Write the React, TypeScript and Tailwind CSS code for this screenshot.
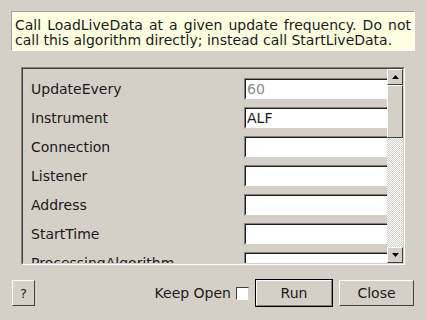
import React from "react";

const rows = [
  { label: "UpdateEvery", value: "60", placeholder: true },
  { label: "Instrument", value: "ALF" },
  { label: "Connection", value: "" },
  { label: "Listener", value: "" },
  { label: "Address", value: "" },
  { label: "StartTime", value: "" },
  { label: "ProcessingAlgorithm", value: "" },
];

function Arrow({ down }: { down?: boolean }) {
  return (
    <svg width="7" height="4" viewBox="0 0 7 4" className="block">
      {down ? <polygon points="0,0 7,0 3.5,4" fill="#000" /> : <polygon points="0,4 7,4 3.5,0" fill="#000" />}
    </svg>
  );
}

function ScrollButton({ down }: { down?: boolean }) {
  return (
    <div className="w-[16px] h-[16px] border border-t-white border-l-white border-b-[#404040] border-r-[#404040] bg-[#d4d0c8] flex items-center justify-center">
      <Arrow down={down} />
    </div>
  );
}

export default function App() {
  return (
    <div
      className="w-[426px] h-[320px] bg-[#d4d0c8] text-[14px] text-[#1a1a1a] overflow-hidden"
      style={{ fontFamily: '"DejaVu Sans", sans-serif' }}
    >
      <div className="pt-[11px] px-[11px]">
        <div className="h-[40px] bg-[#ffffe1] border border-t-[#a0a0a0] border-l-[#a0a0a0] border-b-white border-r-white px-[3px] pt-[6px] leading-[15px] text-justify">
          Call LoadLiveData at a given update frequency. Do not call this algorithm directly; instead call StartLiveData.
        </div>
      </div>

      <div className="mt-[16px] ml-[21px] w-[384px] h-[198px] border border-t-[#808080] border-l-[#808080] border-b-white border-r-white">
        <div className="w-full h-full border border-t-[#404040] border-l-[#404040] border-b-[#d4d0c8] border-r-[#d4d0c8] flex">
          <div className="flex-1 overflow-hidden">
            <div className="pt-[9px] flex flex-col gap-[7px]">
              {rows.map((r) => (
                <div key={r.label} className="flex items-center h-[22px]">
                  <div className="w-[221px] pl-[8px] shrink-0 whitespace-nowrap">{r.label}</div>
                  <div className="w-[160px] shrink-0 h-[22px] bg-white border border-t-[#808080] border-l-[#808080] border-b-[#d4d0c8] border-r-[#d4d0c8]">
                    <div className="h-full border border-t-[#202020] border-l-[#202020] border-b-transparent border-r-transparent pl-[1px] leading-[18px]">
                      <span className={r.placeholder ? "text-[#8a8a8a]" : ""}>{r.value}</span>
                    </div>
                  </div>
                </div>
              ))}
            </div>
          </div>
          <div className="w-[16px] flex flex-col shrink-0">
            <ScrollButton />
            <div className="h-[53px] border border-t-white border-l-white border-b-[#404040] border-r-[#404040] bg-[#d4d0c8]" />
            <div className="flex-1 bg-[repeating-conic-gradient(#ffffff_0_25%,#d4d0c8_0_50%)] bg-[length:2px_2px]" />
            <ScrollButton down />
          </div>
        </div>
      </div>

      <div className="mt-[14px] flex items-center px-[12px]">
        <button className="w-[23px] h-[26px] border border-t-white border-l-white border-b-[#404040] border-r-[#404040] bg-[#d4d0c8] text-[13px] leading-none">
          ?
        </button>
        <div className="flex-1" />
        <span className="mr-[5px]">Keep Open</span>
        <div className="w-[13px] h-[13px] bg-white border border-t-[#404040] border-l-[#404040] border-b-white border-r-[#d4d0c8] mr-[6px]" />
        <button className="w-[78px] h-[28px] border border-black bg-[#d4d0c8]">
          <div className="h-full border border-t-white border-l-white border-b-[#808080] border-r-[#808080] flex items-center justify-center">
            Run
          </div>
        </button>
        <button className="ml-[6px] w-[75px] h-[26px] border border-t-white border-l-white border-b-[#404040] border-r-[#404040] bg-[#d4d0c8] flex items-center justify-center">
          Close
        </button>
      </div>
    </div>
  );
}
